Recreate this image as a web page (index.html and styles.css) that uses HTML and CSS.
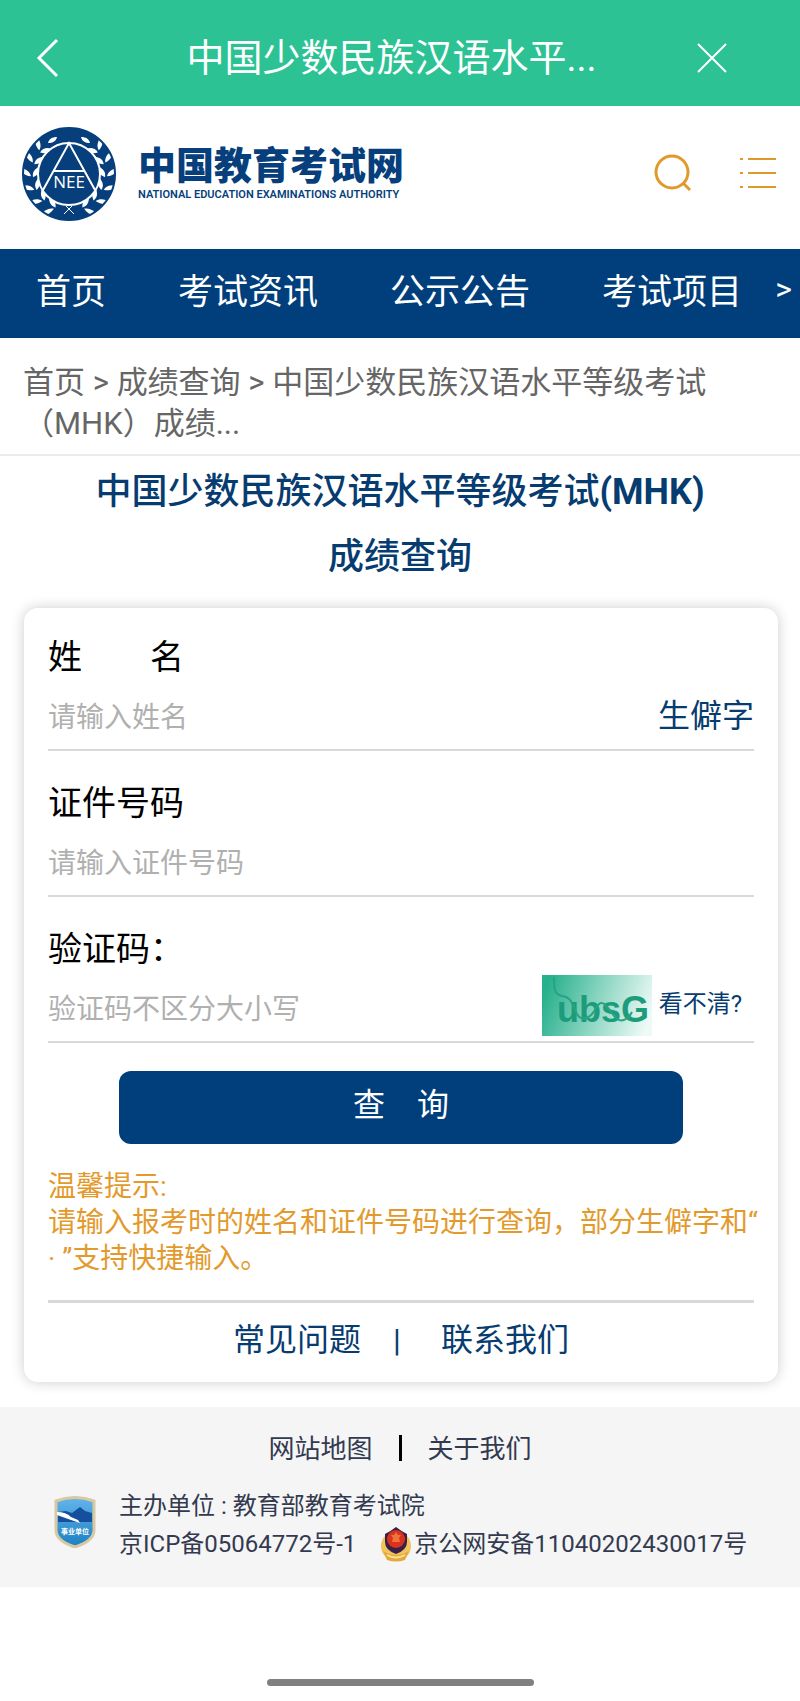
FILE: index.html
```html
<!DOCTYPE html>
<html lang="zh-CN">
<head>
    <meta charset="UTF-8">
    <meta name="viewport" content="width=device-width, initial-scale=1.0">
    <title>中国少数民族汉语水平等级考试(MHK)成绩查询</title>
    <link rel="stylesheet" href="styles.css">
</head>
<body>
<header class="app-bar">
    <button class="icon-btn" aria-label="返回">
        <svg width="24" height="40" viewBox="0 0 24 40"><path d="M22 2 4 20l18 18" fill="none" stroke="#fff" stroke-width="3"/></svg>
    </button>
    <div class="app-title">中国少数民族汉语水平...</div>
    <button class="icon-btn" aria-label="关闭">
        <svg width="32" height="32" viewBox="0 0 32 32"><path d="M2 2l28 28M30 2 2 30" fill="none" stroke="#fff" stroke-width="2"/></svg>
    </button>
</header>

<div class="site-head">
    <a class="logo" href="#">
        <svg class="emblem" viewBox="0 0 94 94">
            <defs>
                <g id="leaf">
                    <path d="M0 1c-6-1-10-4-11-9 6 1 10 4 11 9z"/>
                    <path d="M2 2c-1-5 2-8 6-10 1 5-1 8-6 10z"/>
                </g>
                <g id="branch" fill="#fff">
                    <use href="#leaf" transform="rotate(205 47 47) translate(47 9) rotate(90)"/>
                    <use href="#leaf" transform="rotate(226 47 47) translate(47 9) rotate(90)"/>
                    <use href="#leaf" transform="rotate(247 47 47) translate(47 9) rotate(90)"/>
                    <use href="#leaf" transform="rotate(268 47 47) translate(47 9) rotate(90)"/>
                    <use href="#leaf" transform="rotate(289 47 47) translate(47 9) rotate(90)"/>
                    <use href="#leaf" transform="rotate(310 47 47) translate(47 9) rotate(90)"/>
                    <path d="M26 16c1-4 4-6 9-6-1 4-4 6-9 6z"/>
                </g>
            </defs>
            <circle cx="47" cy="47" r="46" fill="#063f7c"/>
            <use href="#branch"/>
            <use href="#branch" transform="translate(94 0) scale(-1 1)"/>
            <circle cx="47" cy="47" r="46" fill="none" stroke="#063f7c" stroke-width="2"/>
            <circle cx="47" cy="47" r="31" fill="#063f7c" stroke="#fff" stroke-width="2"/>
            <path d="M21 63 47 16l26 47M32 44h30" fill="none" stroke="#fff" stroke-width="2"/>
            <path d="M42 87l8-8M52 87l-8-8" fill="none" stroke="#fff" stroke-width="1"/>
            <text x="47" y="61" class="emblem-text">NEE</text>
        </svg>
        <span class="logo-text">
            <span class="logo-cn">中国教育考试网</span>
            <span class="logo-en">NATIONAL EDUCATION EXAMINATIONS AUTHORITY</span>
        </span>
    </a>
    <div class="head-tools">
        <button class="icon-btn" aria-label="搜索">
            <svg width="40" height="40" viewBox="0 0 40 40" fill="none" stroke="#e09a2b" stroke-width="3"><circle cx="19" cy="19" r="16"/><path d="M30 30l7 7"/></svg>
        </button>
        <button class="icon-btn" aria-label="菜单">
            <svg width="38" height="32" viewBox="0 0 38 32" stroke="#e09a2b" stroke-width="2"><path d="M1 2h3M9 2h28M1 16h3M9 16h28M1 30h3M9 30h28"/></svg>
        </button>
    </div>
</div>

<nav class="nav">
    <a href="#">首页</a>
    <a href="#">考试资讯</a>
    <a href="#">公示公告</a>
    <a href="#">考试项目</a>
    <button class="nav-more" aria-label="更多">&gt;</button>
</nav>

<div class="crumbs">
    <a href="#">首页</a> <span>&gt;</span> <a href="#">成绩查询</a> <span>&gt;</span> <span>中国少数民族汉语水平等级考试</span><br>
    <span>（MHK）成绩...</span>
</div>

<main>
    <h1>中国少数民族汉语水平等级考试<b>(MHK)</b><br>成绩查询</h1>

    <form class="card">
        <div class="field">
            <label for="name">姓　　名</label>
            <div class="row">
                <input id="name" type="text" placeholder="请输入姓名">
                <a class="rare" href="#">生僻字</a>
            </div>
        </div>
        <div class="field">
            <label for="idno">证件号码</label>
            <div class="row">
                <input id="idno" type="text" placeholder="请输入证件号码">
            </div>
        </div>
        <div class="field">
            <label for="code">验证码：</label>
            <div class="row">
                <input id="code" type="text" placeholder="验证码不区分大小写">
                <svg class="captcha" viewBox="0 0 110 61">
                    <defs>
                        <linearGradient id="cap" x1="0" y1="0.4" x2="1" y2="0.6">
                            <stop offset="0" stop-color="#27b08d"/>
                            <stop offset="0.5" stop-color="#8dd6c2"/>
                            <stop offset="1" stop-color="#eefaf6"/>
                        </linearGradient>
                    </defs>
                    <rect width="110" height="61" fill="url(#cap)"/>
                    <text x="15" y="47" class="captcha-text">ubsG</text>
                    <path d="M12 2c0 10 0 18 8 19s10 6 14 16 14 8 20-4 12 0 18 8 14 4 18-4" fill="none" stroke="#27a384" stroke-width="2"/>
                </svg>
                <a class="refresh" href="#">看不清?</a>
            </div>
        </div>

        <button class="submit" type="button">查　询</button>

        <p class="tips">温馨提示:<br>请输入报考时的姓名和证件号码进行查询，部分生僻字和“<br>· ”支持快捷输入。</p>

        <div class="card-links">
            <a href="#">常见问题</a>
            <span class="bar">|</span>
            <a href="#">联系我们</a>
        </div>
    </form>
</main>

<footer>
    <div class="foot-links">
        <a href="#">网站地图</a>
        <a href="#">关于我们</a>
    </div>
    <div class="foot-info">
        <svg class="shield" viewBox="0 0 42 52">
            <defs>
                <linearGradient id="sky" x1="0" y1="0" x2="0" y2="1">
                    <stop offset="0" stop-color="#64b5ea"/>
                    <stop offset="1" stop-color="#1b80c4"/>
                </linearGradient>
            </defs>
            <path d="M2 5Q21-2 40 5v29q0 11-19 17Q2 45 2 34z" fill="url(#sky)" stroke="#d9c9a0" stroke-width="3"/>
            <path d="M4 16l8-1 6 2 8-6 5 4 7 2v9H4z" fill="#164f9c"/>
            <path d="M3 16q9 0 14 5l7 3 2 3-9-3-14-5z" fill="#fff"/>
            <text x="21" y="38" class="shield-text">事业单位</text>
        </svg>
        <div class="foot-text">
            <div>主办单位 : 教育部教育考试院</div>
            <div class="records">
                <a href="#">京ICP备05064772号-1</a>
                <a class="police" href="#">
                    <svg width="32" height="36" viewBox="0 0 32 36">
                        <circle cx="16" cy="20" r="15" fill="#f0c35c"/>
                        <path d="M3 25q13 8 26 0l-4 9q-9 3-18 0z" fill="#e5a83c"/>
                        <path d="M5 8q6-3 11-7 5 4 11 7v8q0 8-11 12Q5 24 5 16z" fill="#3a2044"/>
                        <circle cx="16" cy="13" r="9" fill="#d9321f"/>
                        <path d="M16 6l2 3h3l-2 3 1 4h-8l1-4-2-3h3z" fill="#f0743a"/>
                        <path d="M7 29q9 5 18 0" fill="none" stroke="#fbe29a" stroke-width="2"/>
                    </svg>
                    <span>京公网安备11040202430017号</span>
                </a>
            </div>
        </div>
    </div>
</footer>
<div class="home-bar"></div>
</body>
</html>
```
FILE: styles.css
```css
* {
    box-sizing: border-box;
}

body {
    margin: 0;
    background: #fff;
    color: #000;
    font-family: Roboto, "Noto Sans CJK SC", sans-serif;
}

a {
    color: inherit;
    text-decoration: none;
}

button {
    font-family: inherit;
    border: none;
    background: transparent;
    padding: 0;
    cursor: pointer;
}

svg {
    display: block;
}

.app-bar {
    display: flex;
    align-items: center;
    height: 106px;
    padding: 10px 72px 0 35px;
    background: #2cc294;
    color: #fff;
}

.app-title {
    flex: 1;
    padding-left: 28px;
    font-size: 38px;
    line-height: 48px;
    text-align: center;
}

.site-head {
    display: flex;
    align-items: center;
    justify-content: space-between;
    height: 143px;
    padding: 0 23px 10px 22px;
}

.logo {
    display: flex;
    align-items: center;
    gap: 22px;
    padding-top: 2px;
    color: #063f7c;
}

.emblem {
    width: 94px;
    height: 94px;
}

.emblem-text {
    font-family: "Open Sans", sans-serif;
    font-size: 17px;
    text-anchor: middle;
    fill: #fff;
}

.logo-text {
    display: flex;
    flex-direction: column;
}

.logo-cn {
    font-size: 38px;
    font-weight: 900;
    line-height: 42px;
}

.logo-en {
    font-size: 11px;
    font-weight: 600;
    line-height: 16px;
}

.head-tools {
    display: flex;
    align-items: center;
    gap: 46px;
}

.nav {
    display: flex;
    align-items: center;
    gap: 72px;
    height: 89px;
    padding: 0 8px 10px 36px;
    background: #003f7c;
    color: #fff;
    font-size: 35px;
    white-space: nowrap;
}

.nav-more {
    margin-left: auto;
    color: #fff;
    font-size: 32px;
}

.nav a:nth-last-child(2) {
    margin-right: -72px;
}

.crumbs {
    padding: 24px 23px 10px;
    border-bottom: 2px solid #ececec;
    color: #666;
    font-size: 31px;
    line-height: 41px;
}

h1 {
    margin: 0;
    padding: 4px 24px 18px;
    color: #063c70;
    font-size: 36px;
    font-weight: 500;
    line-height: 65px;
    text-align: center;
}

.card {
    margin: 0 22px 25px 24px;
    padding: 22px 24px 5px;
    border-radius: 14px;
    box-shadow: 0 0 14px rgba(0, 0, 0, 0.2);
}

.field {
    margin-bottom: 25px;
}

.field label {
    display: block;
    font-size: 34px;
    line-height: 54px;
}

.row {
    display: flex;
    align-items: center;
    height: 67px;
    border-bottom: 2px solid #d9d9d9;
}

.row input {
    flex: 1;
    min-width: 0;
    padding: 2px 0 0;
    border: none;
    outline: none;
    background: transparent;
    font-family: inherit;
    font-size: 28px;
}

.row input::placeholder {
    color: #b0b0b0;
}

.rare {
    padding-bottom: 8px;
    color: #063c70;
    font-size: 32px;
}

.captcha {
    width: 110px;
    height: 61px;
    margin-bottom: 6px;
}

.captcha-text {
    fill: #1d9c7c;
    font-family: "Liberation Sans", sans-serif;
    font-size: 36px;
    font-weight: bold;
}

.refresh {
    padding: 0 12px 14px 7px;
    color: #063c70;
    font-size: 24px;
}

.submit {
    display: block;
    width: 80%;
    height: 73px;
    margin: 28px auto 25px;
    padding-bottom: 12px;
    border-radius: 12px;
    background: #003f7c;
    color: #fff;
    font-size: 32px;
}

.tips {
    margin: 0;
    padding-bottom: 23px;
    border-bottom: 3px solid #d9d9d9;
    color: #e39a2d;
    font-size: 28px;
    line-height: 36px;
    white-space: nowrap;
}

.card-links {
    display: flex;
    justify-content: center;
    color: #063c70;
    font-size: 32px;
    line-height: 74px;
}

.bar {
    margin: 0 40px 0 32px;
}

footer {
    padding: 22px 24px 24px 54px;
    background: #f5f5f5;
    color: #333a50;
}

.foot-links {
    display: flex;
    justify-content: center;
    margin: 0 0 18px -30px;
    font-size: 26px;
    line-height: 40px;
}

.foot-links a + a::before {
    content: "";
    display: inline-block;
    width: 3px;
    height: 26px;
    margin: 0 26px;
    background: #000;
    vertical-align: -3px;
}

.foot-info {
    display: flex;
    align-items: center;
    gap: 23px;
    font-size: 24px;
    line-height: 38px;
}

.shield {
    flex: none;
    width: 42px;
    height: 52px;
    margin-bottom: 6px;
}

.shield-text {
    fill: #fff;
    font-size: 7px;
    font-weight: bold;
    text-anchor: middle;
}

.records {
    display: flex;
    gap: 24px;
    white-space: nowrap;
}

.police {
    display: flex;
    align-items: center;
    gap: 2px;
}

.home-bar {
    width: 267px;
    height: 7px;
    margin: 92px auto 15px;
    border-radius: 4px;
    background: #808080;
}
```
